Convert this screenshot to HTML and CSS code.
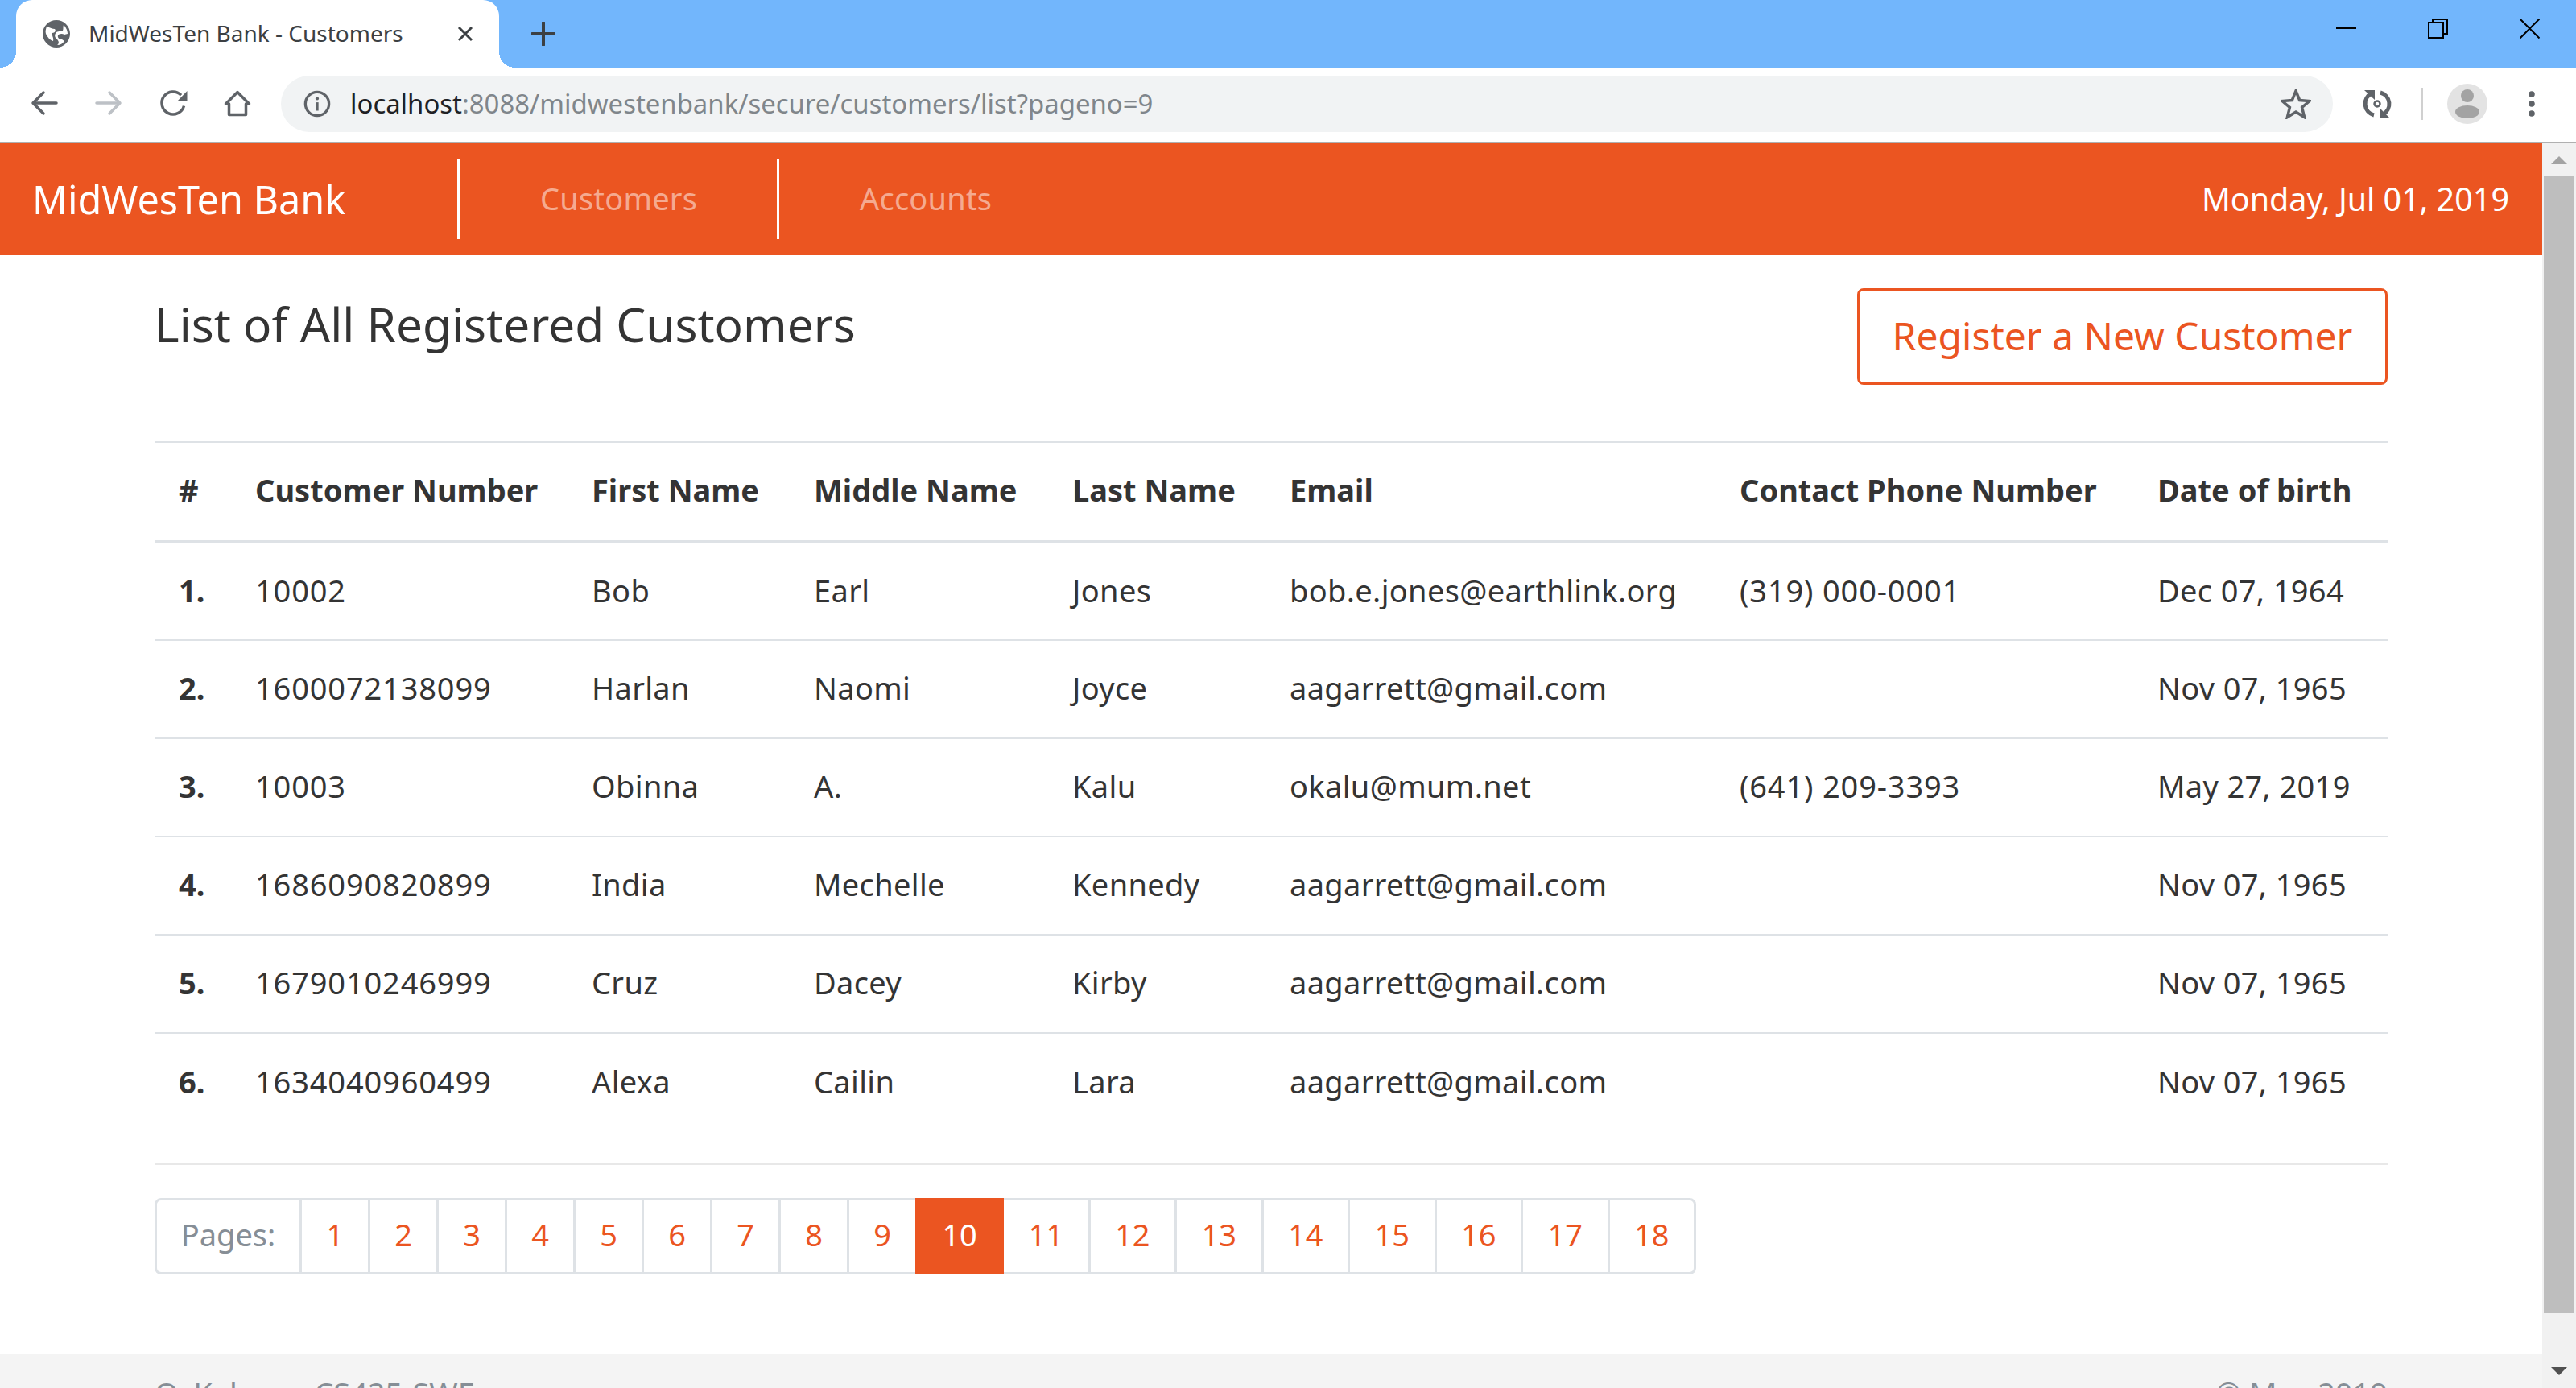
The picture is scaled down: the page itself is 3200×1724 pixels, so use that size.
FILE: index.html
```html
<!DOCTYPE html>
<html>

<head>
  <title>MidWesTen Bank - Customers</title>
  <link rel="stylesheet" href="styles.css">
</head>

<body>
  <!-- Browser chrome -->
  <div class="tabstrip">
    <div class="tab">
      <svg class="tab-globe" viewBox="0 0 36 36"><circle cx="18" cy="18" r="17" fill="#5f6368"/><path d="M6 9c4 1 7 3 10 3 2 2 0 5-3 5-1 3 2 6 1 10-4-1-7-5-9-9-1-3 0-6 1-9zM27 7c2 2 5 6 5 11l-4 1c-3-2-7-1-8 1-1 3 2 5 5 5l3 2c-2 3-5 5-9 5 3-2 2-5 0-7-3-2-4-6-1-9 3-2 6 0 8-2 1-2 0-5 1-7z" fill="#fff"/></svg>
      <span class="tab-title">MidWesTen Bank - Customers</span>
      <svg class="tab-close" viewBox="0 0 20 20"><path d="M2 2l16 16M18 2L2 18" stroke="#3c4043" stroke-width="3" fill="none"/></svg>
    </div>
    <svg class="new-tab" viewBox="0 0 30 30"><path d="M15 1v28M1 15h28" stroke="#3c4043" stroke-width="4" stroke-linecap="round"/></svg>
    <div class="window-btns">
      <svg class="win-btn" viewBox="0 0 25 25"><path d="M0 12h25" stroke="#000" stroke-width="2"/></svg>
      <svg class="win-btn" viewBox="0 0 25 25"><path d="M1 5h18v19H1zM6 5V1h18v18h-5" stroke="#000" stroke-width="2" fill="none"/></svg>
      <svg class="win-btn" viewBox="0 0 25 25"><path d="M.5.5l24 24M24.500.5l-24 24" stroke="#000" stroke-width="2" fill="none"/></svg>
    </div>
  </div>

  <div class="toolbar">
    <svg class="tool-icon" viewBox="0 0 36 36"><path d="M33 17H4M17 4L4 17l13 13" stroke="#5f6368" stroke-width="3.500" fill="none" stroke-linecap="round" stroke-linejoin="round"/></svg>
    <svg class="tool-icon" viewBox="0 0 36 36"><path d="M3 17h29M19 4l13 13-13 13" stroke="#bdc1c6" stroke-width="3.500" fill="none" stroke-linecap="round" stroke-linejoin="round"/></svg>
    <svg class="tool-icon" viewBox="0 0 36 36"><path d="M28 7.200A14 14 0 1 0 31.500 20.600" stroke="#5f6368" stroke-width="3.500" fill="none"/><path d="M35.500 2v13H23z" fill="#5f6368"/></svg>
    <svg class="tool-icon" viewBox="0 0 36 36"><path d="M18 3.500L3.500 18h4v13.500h21V18h4z" stroke="#5f6368" stroke-width="3.500" fill="none" stroke-linejoin="round"/></svg>
    <div class="omnibox">
      <svg class="omni-info" viewBox="0 0 36 36"><circle cx="18" cy="18" r="15.500" stroke="#5f6368" stroke-width="3.500" fill="none"/><path d="M18 16v11" stroke="#5f6368" stroke-width="3.500"/><circle cx="18" cy="11" r="2.200" fill="#5f6368"/></svg>
      <span class="url"><span class="url-host">localhost</span>:8088/midwestenbank/secure/customers/list?pageno=9</span>
      <svg class="omni-star" viewBox="0 0 38 38"><path d="M19 3l4.700 11.500 12.300 1-9.400 8 3 12.100L19 29l-10.600 6.600 3-12.100-9.400-8 12.300-1z" stroke="#5f6368" stroke-width="3.500" fill="none"/></svg>
    </div>
    <svg class="sync-icon" viewBox="0 0 38 38"><path d="M12 6A14.500 14.500 0 0 0 15 33M23 5A14.500 14.500 0 0 1 26 32" stroke="#5f6368" stroke-width="5" fill="none"/><path d="M3 2h13v12zM22 24v12h12z" fill="#5f6368"/><circle cx="19" cy="19" r="3.500" stroke="#5f6368" stroke-width="2.500" fill="none"/></svg>
    <div class="toolbar-sep"></div>
    <svg class="avatar" viewBox="0 0 50 50"><circle cx="25" cy="25" r="25" fill="#e3e3e3"/><circle cx="25" cy="15" r="8" fill="#a3a3a3"/><ellipse cx="25" cy="35" rx="15" ry="8" fill="#a3a3a3"/></svg>
    <svg class="menu-dots" viewBox="0 0 8 32"><circle cx="4" cy="4" r="3.800" fill="#5f6368"/><circle cx="4" cy="16" r="3.800" fill="#5f6368"/><circle cx="4" cy="28" r="3.800" fill="#5f6368"/></svg>
  </div>

  <div class="viewport">
    <div class="page">
      <header class="navbar">
        <a class="brand">MidWesTen Bank</a>
        <a class="nav-link">Customers</a>
        <a class="nav-link nav-link-second">Accounts</a>
        <span class="nav-date">Monday, Jul 01, 2019</span>
      </header>

      <main class="content">
        <div class="title-row">
          <h1 class="page-title">List of All Registered Customers</h1>
          <a class="btn-register">Register a New Customer</a>
        </div>

        <table class="customers">
          <colgroup>
            <col class="c-num"><col class="c-cust"><col class="c-first"><col class="c-mid"><col class="c-last"><col class="c-email"><col class="c-phone"><col class="c-dob">
          </colgroup>
          <thead>
            <tr><th>#</th><th>Customer Number</th><th>First Name</th><th>Middle Name</th><th>Last Name</th><th>Email</th><th>Contact Phone Number</th><th>Date of birth</th></tr>
          </thead>
          <tbody>
            <tr><th>1.</th><td class="digits">10002</td><td>Bob</td><td>Earl</td><td>Jones</td><td>bob.e.jones@earthlink.org</td><td class="digits">(319) 000-0001</td><td>Dec 07, 1964</td></tr>
            <tr><th>2.</th><td class="digits">1600072138099</td><td>Harlan</td><td>Naomi</td><td>Joyce</td><td>aagarrett@gmail.com</td><td></td><td>Nov 07, 1965</td></tr>
            <tr><th>3.</th><td class="digits">10003</td><td>Obinna</td><td>A.</td><td>Kalu</td><td>okalu@mum.net</td><td class="digits">(641) 209-3393</td><td>May 27, 2019</td></tr>
            <tr><th>4.</th><td class="digits">1686090820899</td><td>India</td><td>Mechelle</td><td>Kennedy</td><td>aagarrett@gmail.com</td><td></td><td>Nov 07, 1965</td></tr>
            <tr><th>5.</th><td class="digits">1679010246999</td><td>Cruz</td><td>Dacey</td><td>Kirby</td><td>aagarrett@gmail.com</td><td></td><td>Nov 07, 1965</td></tr>
            <tr><th>6.</th><td class="digits">1634040960499</td><td>Alexa</td><td>Cailin</td><td>Lara</td><td>aagarrett@gmail.com</td><td></td><td>Nov 07, 1965</td></tr>
          </tbody>
        </table>

        <hr class="rule">

        <ul class="pagination">
          <li class="page-label">Pages:</li>
          <li class="pg">1</li><li class="pg">2</li><li class="pg">3</li><li class="pg">4</li><li class="pg">5</li><li class="pg">6</li><li class="pg">7</li><li class="pg">8</li><li class="pg">9</li>
          <li class="pg pg-active">10</li>
          <li class="pg pg-wide">11</li><li class="pg pg-wide">12</li><li class="pg pg-wide">13</li><li class="pg pg-wide">14</li><li class="pg pg-wide">15</li><li class="pg pg-wide">16</li><li class="pg pg-wide">17</li><li class="pg pg-wide">18</li>
        </ul>
      </main>

      <footer class="footer">
        <span>O. Kalu <span class="footer-sep">—</span> CS425-SWE</span>
        <span>© May 2019</span>
      </footer>
    </div>

    <div class="scrollbar">
      <div class="arrow-up"></div>
      <div class="thumb"></div>
      <div class="arrow-down"></div>
    </div>
  </div>
</body>

</html>
```

FILE: styles.css
```css
* {
  box-sizing: border-box;
}

body {
  margin: 0;
  height: 1724px;
  overflow: hidden;
  font-family: "Noto Sans", "Open Sans", sans-serif;
  color: #343434;
  background-color: white;
}

/* Browser chrome */
.tabstrip {
  height: 84px;
  background-color: #72b6fc;
  display: flex;
  align-items: flex-end;
}

.tab {
  position: relative;
  width: 600px;
  height: 84px;
  margin-left: 20px;
  padding: 0 32px;
  background-color: white;
  border-radius: 20px 20px 0 0;
  display: flex;
  align-items: center;
}

/* flared corners at the foot of the tab */
.tab::before,
.tab::after {
  content: "";
  position: absolute;
  bottom: 0;
  width: 20px;
  height: 20px;
}

.tab::before {
  left: -20px;
  background: radial-gradient(circle at 0 0, transparent 20px, white 20px);
}

.tab::after {
  right: -20px;
  background: radial-gradient(circle at 100% 0, transparent 20px, white 20px);
}

.tab-globe {
  width: 36px;
  height: 36px;
}

.tab-title {
  margin-left: 22px;
  padding-bottom: 2px;
  flex: 1;
  font-size: 28px;
  color: #3c4043;
  white-space: nowrap;
}

.tab-close {
  width: 20px;
  height: 20px;
}

.new-tab {
  width: 30px;
  height: 30px;
  margin: 0 0 27px 40px;
}

.window-btns {
  margin-left: auto;
  height: 84px;
  padding: 23px 45px 0 0;
  display: flex;
  gap: 89px;
}

.win-btn {
  width: 25px;
  height: 25px;
}

.toolbar {
  height: 93px;
  padding: 0 51px 2px 37px;
  border-bottom: 1px solid #b0b0b0;
  display: flex;
  align-items: center;
  gap: 44px;
}

.tool-icon {
  width: 36px;
  height: 36px;
}

.omnibox {
  flex: 1;
  height: 70px;
  margin-left: -8px;
  padding: 0 27px 0 28px;
  background-color: #f1f3f4;
  border-radius: 35px;
  display: flex;
  align-items: center;
}

.omni-info {
  width: 34px;
  height: 34px;
}

.url {
  margin-left: 24px;
  padding-bottom: 2px;
  flex: 1;
  font-size: 32.900px;
  color: #80868b;
  white-space: nowrap;
}

.url-host {
  color: #202124;
}

.omni-star {
  width: 38px;
  height: 38px;
}

.sync-icon {
  width: 38px;
  height: 38px;
  margin-left: -8px;
}

.toolbar-sep {
  width: 2px;
  height: 40px;
  background-color: #d0d0d0;
  margin-left: -8px;
}

.avatar {
  width: 50px;
  height: 50px;
  margin-left: -14px;
}

.menu-dots {
  width: 8px;
  height: 32px;
  margin-left: 7px;
}

/* Page */
.viewport {
  height: 1547px;
  display: flex;
}

.page {
  flex: 1;
  min-width: 0;
  overflow: hidden;
}

.navbar {
  height: 140px;
  background-color: #eb5521;
  display: flex;
  align-items: center;
  color: white;
}

.brand {
  width: 571px;
  height: 100px;
  padding-left: 40px;
  border-right: 3px solid white;
  font-size: 48.500px;
  line-height: 100px;
}

.nav-link {
  width: 397px;
  height: 100px;
  padding-left: 100px;
  border-right: 3px solid white;
  font-size: 38px;
  letter-spacing: 0.2px;
  line-height: 98px;
  color: rgba(255, 255, 255, 0.5);
}

.nav-link-second {
  border-right: none;
}

.nav-date {
  margin-left: auto;
  padding-right: 41px;
  font-size: 39.500px;
}

.content {
  padding: 0 192px;
  height: 1365px;
}

.title-row {
  height: 231px;
  padding-top: 41px;
  display: flex;
  justify-content: space-between;
  align-items: flex-start;
}

.page-title {
  margin: 9px 0 0 0;
  font-size: 58.500px;
  font-weight: 400;
  line-height: 1.2;
}

.btn-register {
  width: 659px;
  height: 120px;
  border: 3px solid #eb5521;
  border-radius: 8px;
  color: #eb5521;
  font-size: 48px;
  line-height: 112px;
  text-align: center;
}

.customers {
  width: 100%;
  table-layout: fixed;
  border-collapse: collapse;
  font-size: 38px;
  border-top: 2px solid #dee2e6;
}

.c-num { width: 95px; }
.c-cust { width: 418px; }
.c-first { width: 276px; }
.c-mid { width: 321px; }
.c-last { width: 270px; }
.c-email { width: 559px; }
.c-phone { width: 519px; }
.c-dob { width: 317px; }

.customers th,
.customers td {
  padding: 0 0 4px 30px;
  text-align: left;
  white-space: nowrap;
}

.customers thead th {
  padding-bottom: 6px;
}

.customers td {
  letter-spacing: 0.35px;
}

.customers td.digits {
  letter-spacing: 0.85px;
}

.customers thead tr {
  height: 124px;
  border-bottom: 4px solid #dee2e6;
}

.customers tbody tr {
  height: 122px;
  border-bottom: 2px solid #dee2e6;
}

.customers tbody tr:last-child {
  border-bottom: none;
}

.rule {
  margin: 40px 0 0 0;
  border: none;
  border-top: 2px solid #e8e8e8;
}

.pagination {
  list-style: none;
  margin: 41px 0 0 0;
  padding: 0;
  display: inline-flex;
  height: 95px;
  font-size: 38px;
}

.page-label {
  width: 183px;
  padding-bottom: 5px;
  border: 3px solid #dee2e6;
  border-radius: 8px 0 0 8px;
  color: #868e96;
  display: flex;
  align-items: center;
  justify-content: center;
}

.pg {
  width: 88px;
  margin-left: -3px;
  padding-bottom: 5px;
  border: 3px solid #dee2e6;
  color: #eb5521;
  display: flex;
  align-items: center;
  justify-content: center;
}

.pg-wide {
  width: 110.500px;
}

.pg-wide:last-child {
  border-radius: 0 8px 8px 0;
}

.pg-active {
  position: relative;
  width: 110px;
  color: white;
  background-color: #eb5521;
  border-color: #eb5521;
}

.footer {
  height: 42px;
  padding: 22px 192px 0;
  background-color: #f4f4f4;
  display: flex;
  justify-content: space-between;
  font-size: 38px;
  color: #868e96;
  overflow: hidden;
}

.footer-sep {
  margin: 0 7px;
}

/* Scrollbar */
.scrollbar {
  width: 42px;
  background-color: #f1f1f1;
  display: flex;
  flex-direction: column;
  align-items: center;
}

.arrow-up {
  margin-top: 17px;
  border-left: 10px solid transparent;
  border-right: 10px solid transparent;
  border-bottom: 10px solid #a3a3a3;
}

.thumb {
  width: 38px;
  height: 1412px;
  margin-top: 15px;
  background-color: #bebebe;
}

.arrow-down {
  margin-top: 67px;
  border-left: 10px solid transparent;
  border-right: 10px solid transparent;
  border-top: 10px solid #505050;
}
```
